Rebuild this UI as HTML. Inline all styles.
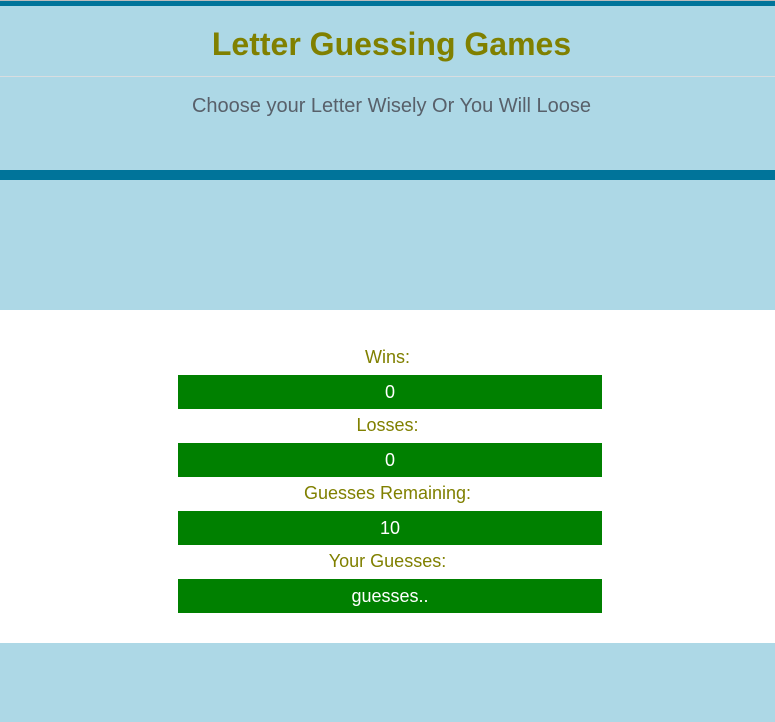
<!DOCTYPE html>
<html><head><style>
body{margin:0;background:#add8e6;font-family:"Liberation Sans",sans-serif;width:775px;height:722px;overflow:hidden;position:relative}
.a{position:absolute;left:0;width:775px}
.t{text-align:center}
.box{position:absolute;left:178px;width:424px;height:34px;background:#008000;color:#fff;font-size:18px;line-height:34px;text-align:center}
.lab{position:absolute;left:0;width:775px;text-align:center;color:#808000;font-size:18px}
</style></head><body>
<div class="a" style="top:0;height:1px;background:#bbb"></div>
<div class="a" style="top:1px;height:5px;background:#00749a"></div>
<div class="a t" style="top:26px;font-size:32px;font-weight:bold;color:#808000;line-height:36px;padding-left:4px">Letter Guessing Games</div>
<div class="a" style="top:76px;height:1px;background:#d8dde0"></div>
<div class="a t" style="top:94px;font-size:20px;color:#58606a;line-height:24px;padding-left:4px">Choose your Letter Wisely Or You Will Loose</div>
<div class="a" style="top:170px;height:10px;background:#00749a"></div>
<div class="a" style="top:310px;height:333px;background:#fff"></div>
<div class="lab" style="top:347px">Wins:</div>
<div class="box" style="top:375px">0</div>
<div class="lab" style="top:415px">Losses:</div>
<div class="box" style="top:443px">0</div>
<div class="lab" style="top:483px">Guesses Remaining:</div>
<div class="box" style="top:511px">10</div>
<div class="lab" style="top:551px">Your Guesses:</div>
<div class="box" style="top:579px">guesses..</div>
</body></html>
